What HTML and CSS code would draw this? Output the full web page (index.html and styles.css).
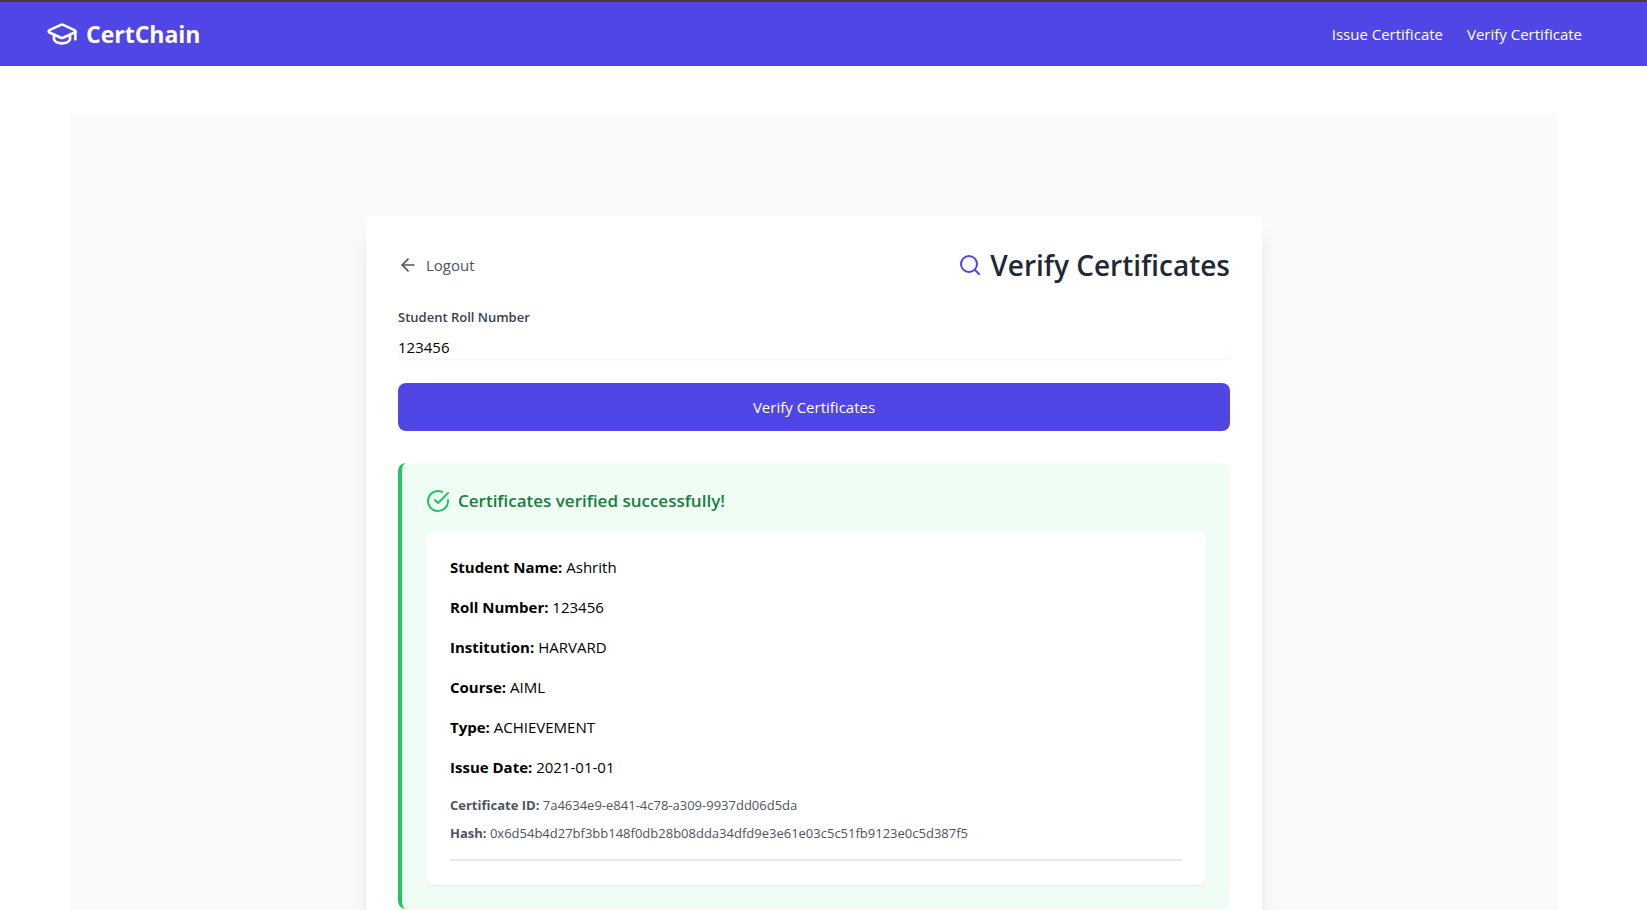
FILE: index.html
```html
<!DOCTYPE html>
<html lang="en">
<head>
<meta charset="utf-8">
<meta name="viewport" content="width=device-width, initial-scale=1">
<title>CertChain</title>
<link rel="stylesheet" href="styles.css">
</head>
<body>
<div class="page">
  <header class="navbar">
    <div class="container navbar-inner">
      <a class="brand" href="#">
        <svg class="brand-icon" viewBox="0 0 24 24" fill="none" stroke="currentColor" stroke-width="2" stroke-linecap="round" stroke-linejoin="round" aria-hidden="true"><path d="M21.42 10.922a1 1 0 0 0-.019-1.838L12.83 5.18a2 2 0 0 0-1.66 0L2.6 9.08a1 1 0 0 0 0 1.832l8.57 3.908a2 2 0 0 0 1.66 0z"/><path d="M22 10v6"/><path d="M6 12.500V16a6 3 0 0 0 12 0v-3.500"/></svg>
        <span>CertChain</span>
      </a>
      <nav class="nav-links">
        <a href="#">Issue Certificate</a>
        <a href="#">Verify Certificate</a>
      </nav>
    </div>
  </header>
  <main class="container main">
    <div class="backdrop">
      <section class="card">
        <div class="card-header">
          <button class="logout" type="button">
            <svg class="logout-icon" viewBox="0 0 24 24" fill="none" stroke="currentColor" stroke-width="2" stroke-linecap="round" stroke-linejoin="round" aria-hidden="true"><path d="m12 19-7-7 7-7"/><path d="M19 12H5"/></svg>
            Logout
          </button>
          <div class="heading">
            <svg class="icon heading-icon" viewBox="0 0 24 24" fill="none" stroke="currentColor" stroke-width="2" stroke-linecap="round" stroke-linejoin="round" aria-hidden="true"><circle cx="11" cy="11" r="8"/><path d="m21 21-4.300-4.300"/></svg>
            <h1>Verify Certificates</h1>
          </div>
        </div>
        <form class="form">
          <label for="roll">Student Roll Number</label>
          <input id="roll" type="text" value="123456">
          <button class="submit" type="button">Verify Certificates</button>
        </form>
        <div class="result">
          <div class="result-title">
            <svg class="icon" viewBox="0 0 24 24" fill="none" stroke="currentColor" stroke-width="2" stroke-linecap="round" stroke-linejoin="round" aria-hidden="true"><path d="M22 11.080V12a10 10 0 1 1-5.930-9.140"/><path d="m9 11 3 3L22 4"/></svg>
            <h2>Certificates verified successfully!</h2>
          </div>
          <div class="certificate">
            <div class="fields">
              <p><strong>Student Name:</strong> Ashrith</p>
              <p><strong>Roll Number:</strong> 123456</p>
              <p><strong>Institution:</strong> HARVARD</p>
              <p><strong>Course:</strong> AIML</p>
              <p><strong>Type:</strong> ACHIEVEMENT</p>
              <p><strong>Issue Date:</strong> 2021-01-01</p>
            </div>
            <div class="meta">
              <p><strong>Certificate ID:</strong> 7a4634e9-e841-4c78-a309-9937dd06d5da</p>
              <p><strong>Hash:</strong> 0x6d54b4d27bf3bb148f0db28b08dda34dfd9e3e61e03c5c51fb9123e0c5d387f5</p>
            </div>
            <hr>
          </div>
        </div>
      </section>
    </div>
  </main>
</div>
</body>
</html>
```
FILE: styles.css
```css
* { box-sizing: border-box; margin: 0; padding: 0; }

body {
  font-family: "Segoe UI", "Open Sans", "Noto Sans", sans-serif;
  font-size: 15px;
  line-height: 24px;
  color: #000;
  background: #fff;
}

button, input { font: inherit; border: 0; background: none; }
a { color: inherit; text-decoration: none; }
svg { display: block; flex: none; }

.page { height: 100vh; overflow-y: auto; scrollbar-width: none; }

.container { width: 100%; max-width: 1536px; margin: 0 auto; }

.navbar {
  padding-right: 19px;
  border-top: 2px solid #4b3a35;
  background: #4f46e5;
  color: #fff;
}
.navbar-inner {
  display: flex;
  align-items: center;
  justify-content: space-between;
  height: 64px;
}
.brand {
  display: flex;
  align-items: center;
  gap: 8px;
  font-size: 23px;
  line-height: 32px;
  font-weight: 700;
}
.brand-icon { width: 32px; height: 32px; }
.nav-links { display: flex; gap: 24px; }

.page > .main { max-width: 1555px; padding: 48px 43px 0 24px; }
.backdrop { padding: 101px 24px 48px; background: #f9fafb; }

.card {
  max-width: 896px;
  margin: 0 auto;
  padding: 32px;
  border-radius: 8px;
  background: #fff;
  box-shadow: 0 20px 25px -5px rgb(0 0 0 / 0.1), 0 8px 10px -6px rgb(0 0 0 / 0.1);
}
.card-header {
  display: flex;
  align-items: center;
  justify-content: space-between;
  margin-bottom: 24px;
}
.logout { display: flex; align-items: center; gap: 8px; color: #4b5563; cursor: pointer; }
.logout-icon { width: 20px; height: 20px; }
.icon { width: 24px; height: 24px; }
.heading { display: flex; align-items: center; gap: 8px; }
.heading-icon { color: #4f46e5; }
.heading h1 { font-size: 28px; line-height: 36px; font-weight: 600; color: #1f2937; }

.form { display: flex; flex-direction: column; }
.form label {
  margin-bottom: 8px;
  font-size: 13px;
  line-height: 20px;
  font-weight: 600;
  color: #374151;
}
.form input {
  width: 100%;
  height: 24px;
  margin-bottom: 24px;
  border-radius: 8px;
  box-shadow: 0 1px 2px rgb(0 0 0 / 0.05);
}
.submit {
  padding: 12px 24px;
  border-radius: 8px;
  background: #4f46e5;
  color: #fff;
  cursor: pointer;
}

.result {
  margin-top: 32px;
  padding: 24px;
  border-left: 4px solid #22c55e;
  border-radius: 8px;
  background: #f0fdf4;
}
.result-title {
  display: flex;
  align-items: center;
  gap: 8px;
  margin-bottom: 16px;
  color: #22c55e;
}
.result-title h2 { font-size: 17px; line-height: 28px; font-weight: 600; color: #15803d; }

.certificate {
  padding: 24px;
  border-radius: 8px;
  background: #fff;
  box-shadow: 0 1px 2px rgb(0 0 0 / 0.05);
}
.fields { display: grid; gap: 16px; }
.meta {
  display: grid;
  gap: 8px;
  margin: 16px 0;
  font-size: 13px;
  line-height: 20px;
  color: #4b5563;
}
.certificate strong { font-weight: 700; }
.certificate hr { border: 0; border-top: 2px solid #e5e7eb; }
```
